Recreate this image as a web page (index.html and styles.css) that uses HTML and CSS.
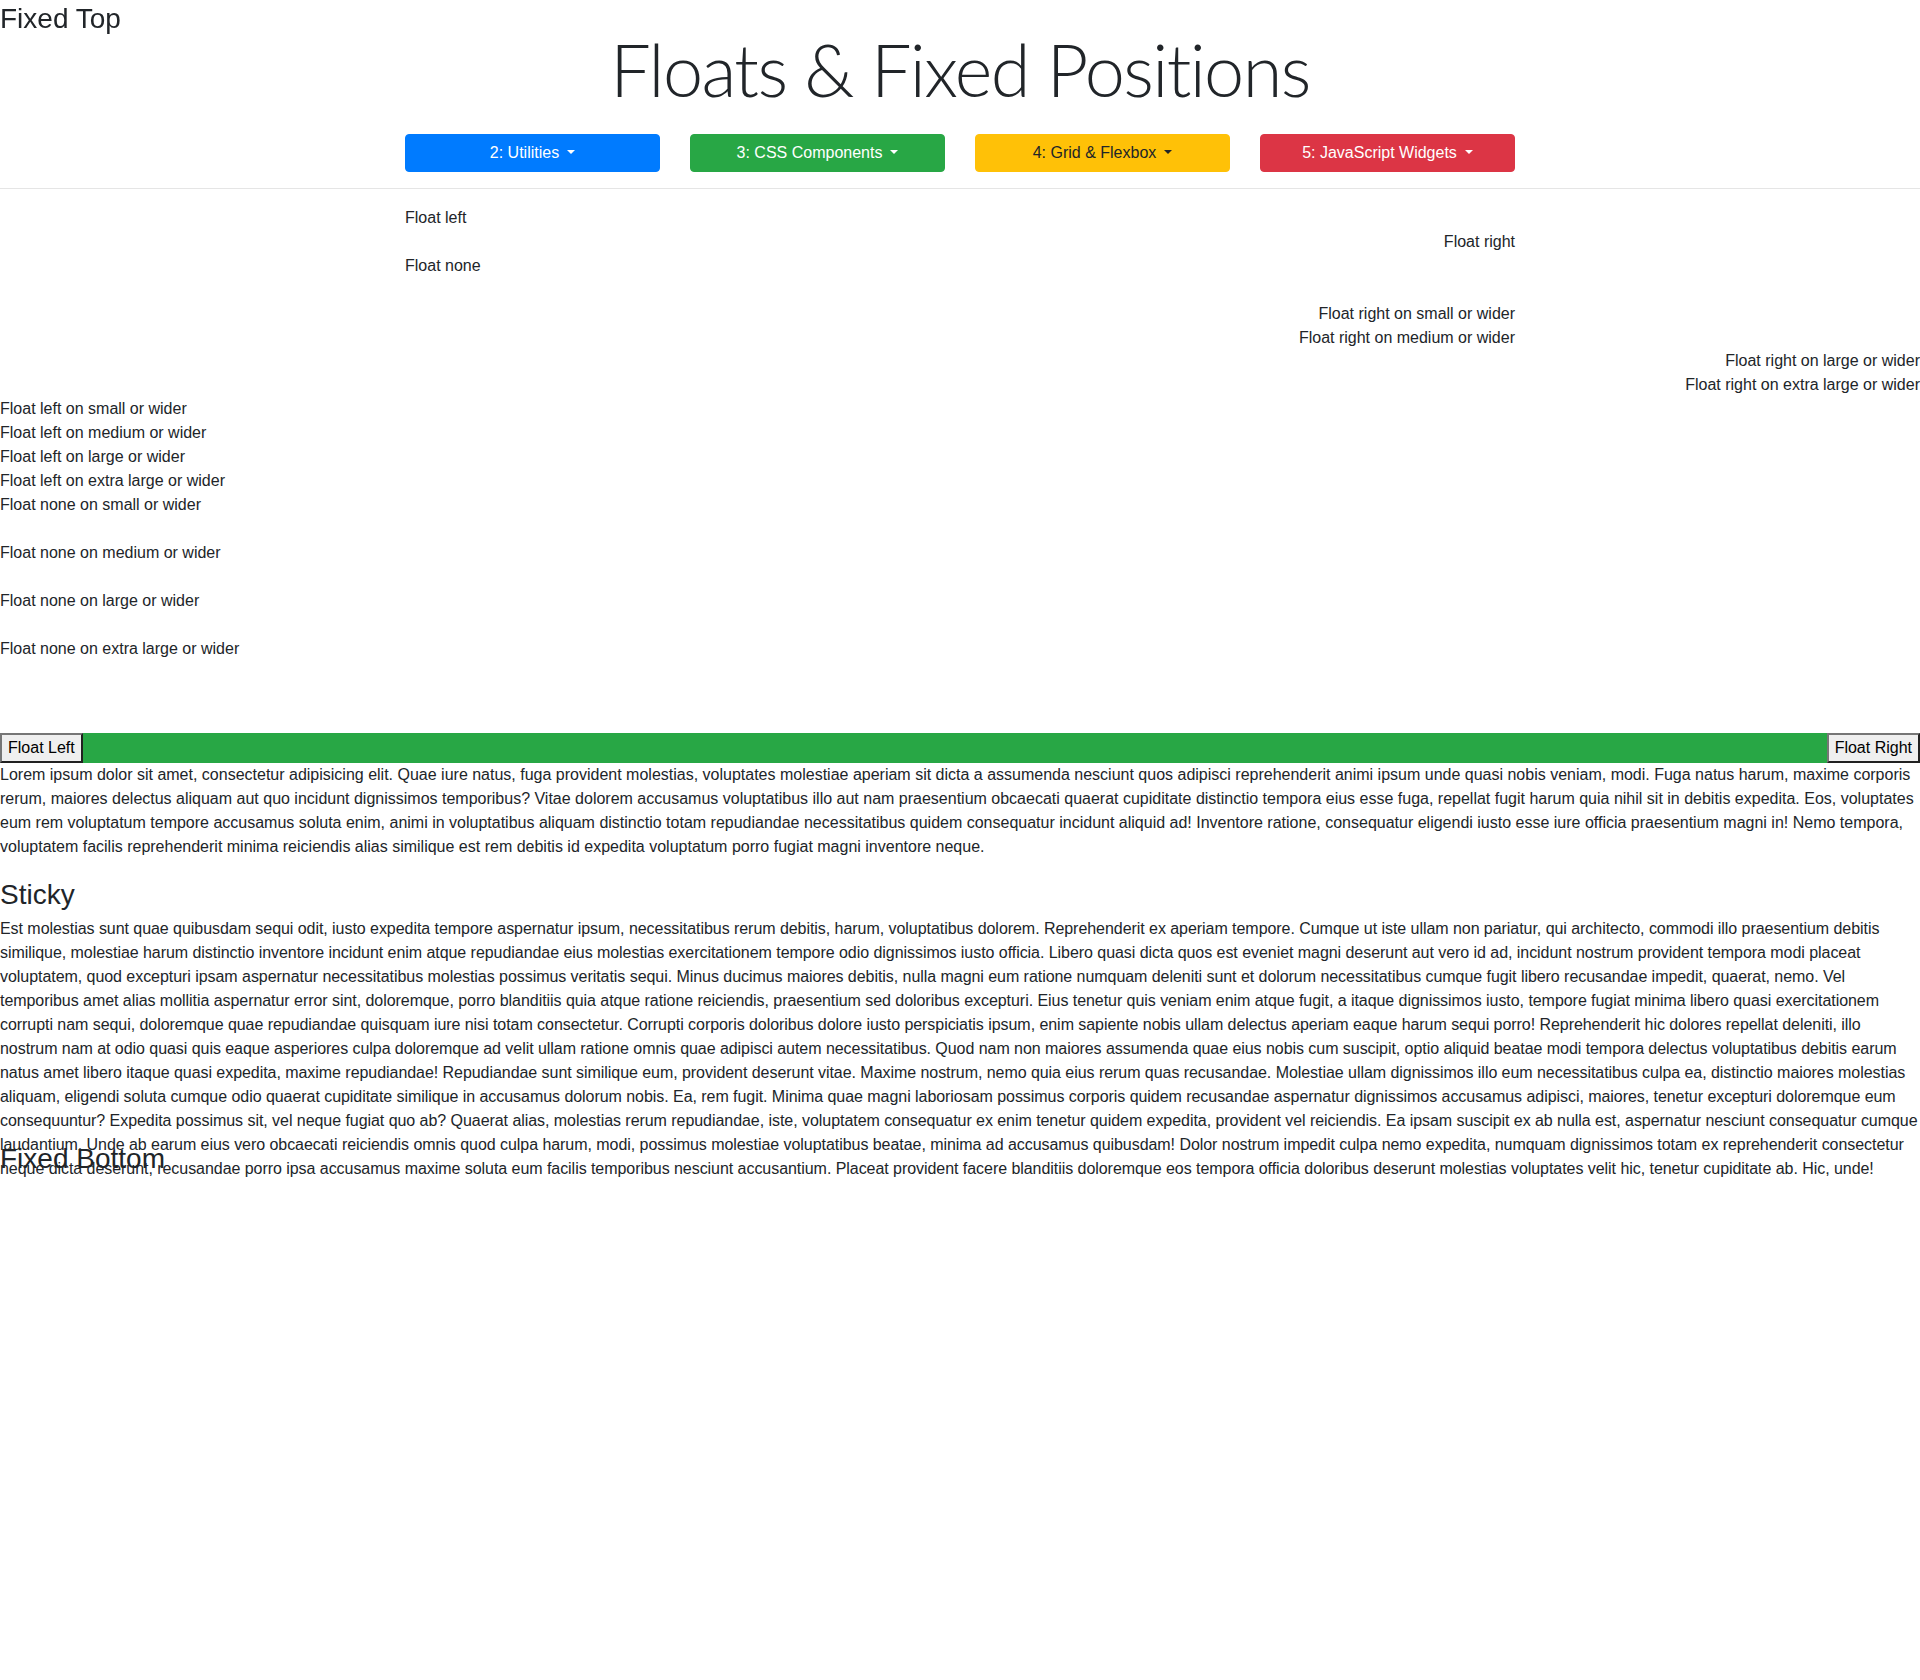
FILE: index.html
```html
<!DOCTYPE html>
<html lang="en">
<head>
<meta charset="utf-8">
<title>Floats &amp; Fixed Positions</title>
<link rel="stylesheet" href="styles.css">
</head>
<body>
<h3 class="fixed-top">Fixed Top</h3>

<header class="container">
  <h1 class="display">Floats &amp; Fixed Positions</h1>
  <nav class="nav-row">
    <button class="btn btn-primary dropdown-toggle">2: Utilities</button>
    <button class="btn btn-success dropdown-toggle">3: CSS Components</button>
    <button class="btn btn-warning dropdown-toggle">4: Grid &amp; Flexbox</button>
    <button class="btn btn-danger dropdown-toggle">5: JavaScript Widgets</button>
  </nav>
</header>
<hr class="divider">

<section class="container floats">
  <div class="line">Float left</div>
  <div class="line right">Float right</div>
  <div class="line spaced">Float none</div>
  <div class="line right">Float right on small or wider</div>
  <div class="line right">Float right on medium or wider</div>
</section>

<section class="floats-wide">
  <div class="line right">Float right on large or wider</div>
  <div class="line right">Float right on extra large or wider</div>
  <div class="line">Float left on small or wider</div>
  <div class="line">Float left on medium or wider</div>
  <div class="line">Float left on large or wider</div>
  <div class="line">Float left on extra large or wider</div>
  <div class="line spaced">Float none on small or wider</div>
  <div class="line spaced">Float none on medium or wider</div>
  <div class="line spaced">Float none on large or wider</div>
  <div class="line">Float none on extra large or wider</div>
</section>

<div class="bar">
  <button class="plain-btn">Float Left</button>
  <button class="plain-btn">Float Right</button>
</div>

<p class="text">Lorem ipsum dolor sit amet, consectetur adipisicing elit. Quae iure natus, fuga provident molestias, voluptates molestiae aperiam sit dicta a assumenda nesciunt quos adipisci reprehenderit animi ipsum unde quasi nobis veniam, modi. Fuga natus harum, maxime corporis<br>
rerum, maiores delectus aliquam aut quo incidunt dignissimos temporibus? Vitae dolorem accusamus voluptatibus illo aut nam praesentium obcaecati quaerat cupiditate distinctio tempora eius esse fuga, repellat fugit harum quia nihil sit in debitis expedita. Eos, voluptates<br>
eum rem voluptatum tempore accusamus soluta enim, animi in voluptatibus aliquam distinctio totam repudiandae necessitatibus quidem consequatur incidunt aliquid ad! Inventore ratione, consequatur eligendi iusto esse iure officia praesentium magni in! Nemo tempora,<br>
voluptatem facilis reprehenderit minima reiciendis alias similique est rem debitis id expedita voluptatum porro fugiat magni inventore neque.</p>

<h3 class="sticky">Sticky</h3>
<p class="text text-tight">Est molestias sunt quae quibusdam sequi odit, iusto expedita tempore aspernatur ipsum, necessitatibus rerum debitis, harum, voluptatibus dolorem. Reprehenderit ex aperiam tempore. Cumque ut iste ullam non pariatur, qui architecto, commodi illo praesentium debitis<br>
similique, molestiae harum distinctio inventore incidunt enim atque repudiandae eius molestias exercitationem tempore odio dignissimos iusto officia. Libero quasi dicta quos est eveniet magni deserunt aut vero id ad, incidunt nostrum provident tempora modi placeat<br>
voluptatem, quod excepturi ipsam aspernatur necessitatibus molestias possimus veritatis sequi. Minus ducimus maiores debitis, nulla magni eum ratione numquam deleniti sunt et dolorum necessitatibus cumque fugit libero recusandae impedit, quaerat, nemo. Vel<br>
temporibus amet alias mollitia aspernatur error sint, doloremque, porro blanditiis quia atque ratione reiciendis, praesentium sed doloribus excepturi. Eius tenetur quis veniam enim atque fugit, a itaque dignissimos iusto, tempore fugiat minima libero quasi exercitationem<br>
corrupti nam sequi, doloremque quae repudiandae quisquam iure nisi totam consectetur. Corrupti corporis doloribus dolore iusto perspiciatis ipsum, enim sapiente nobis ullam delectus aperiam eaque harum sequi porro! Reprehenderit hic dolores repellat deleniti, illo<br>
nostrum nam at odio quasi quis eaque asperiores culpa doloremque ad velit ullam ratione omnis quae adipisci autem necessitatibus. Quod nam non maiores assumenda quae eius nobis cum suscipit, optio aliquid beatae modi tempora delectus voluptatibus debitis earum<br>
natus amet libero itaque quasi expedita, maxime repudiandae! Repudiandae sunt similique eum, provident deserunt vitae. Maxime nostrum, nemo quia eius rerum quas recusandae. Molestiae ullam dignissimos illo eum necessitatibus culpa ea, distinctio maiores molestias<br>
aliquam, eligendi soluta cumque odio quaerat cupiditate similique in accusamus dolorum nobis. Ea, rem fugit. Minima quae magni laboriosam possimus corporis quidem recusandae aspernatur dignissimos accusamus adipisci, maiores, tenetur excepturi doloremque eum<br>
consequuntur? Expedita possimus sit, vel neque fugiat quo ab? Quaerat alias, molestias rerum repudiandae, iste, voluptatem consequatur ex enim tenetur quidem expedita, provident vel reiciendis. Ea ipsam suscipit ex ab nulla est, aspernatur nesciunt consequatur cumque<br>
laudantium. Unde ab earum eius vero obcaecati reiciendis omnis quod culpa harum, modi, possimus molestiae voluptatibus beatae, minima ad accusamus quibusdam! Dolor nostrum impedit culpa nemo expedita, numquam dignissimos totam ex reprehenderit consectetur<br>
neque dicta deserunt, recusandae porro ipsa accusamus maxime soluta eum facilis temporibus nesciunt accusantium. Placeat provident facere blanditiis doloremque eos tempora officia doloribus deserunt molestias voluptates velit hic, tenetur cupiditate ab. Hic, unde!</p>

<h3 class="fixed-bottom">Fixed Bottom</h3>
</body>
</html>
```

FILE: styles.css
```css
html, body {
  margin: 0;
  padding: 0;
}

body {
  font-family: "Liberation Sans", Arial, sans-serif;
  font-size: 16px;
  line-height: 24px;
  color: #212529;
  background: #fff;
  position: relative;
  min-height: 1680px;
}

.container {
  width: 1110px;
  margin: 0 auto;
}

.fixed-top,
.fixed-bottom,
.sticky {
  font-family: "Liberation Sans", Arial, sans-serif;
  font-size: 28px;
  line-height: 1.2;
  font-weight: 400;
  color: #212529;
}

.fixed-top {
  position: fixed;
  top: 0;
  left: 0;
  margin: 0;
  padding-top: 2px;
  z-index: 10;
}

.fixed-bottom {
  position: absolute;
  top: 1142px;
  left: 0;
  margin: 0;
  z-index: 10;
}

.display {
  font-family: Lato, "Liberation Sans", sans-serif;
  font-weight: 300;
  font-size: 72px;
  line-height: 1.2;
  letter-spacing: -1.6px;
  text-align: center;
  margin: 26px 0 22px;
  color: #212529;
}

.nav-row {
  display: grid;
  grid-template-columns: repeat(4, 1fr);
  column-gap: 30px;
}

.btn {
  font-family: "Liberation Sans", Arial, sans-serif;
  font-size: 16px;
  line-height: 24px;
  height: 38px;
  padding: 6px 12px;
  border: 1px solid transparent;
  border-radius: 4px;
  color: #fff;
  text-align: center;
  cursor: pointer;
}

.btn-primary { background: #007bff; border-color: #007bff; }
.btn-success { background: #28a745; border-color: #28a745; }
.btn-warning { background: #ffc107; border-color: #ffc107; color: #212529; }
.btn-danger  { background: #dc3545; border-color: #dc3545; }

.dropdown-toggle::after {
  content: "";
  display: inline-block;
  margin-left: 8px;
  vertical-align: 0.255em;
  border-top: 0.3em solid;
  border-right: 0.3em solid transparent;
  border-left: 0.3em solid transparent;
  border-bottom: 0;
}

.divider {
  margin: 16px 0;
  border: 0;
  border-top: 1px solid rgba(0, 0, 0, 0.1);
  height: 0;
}

.floats {
  padding-top: 1px;
  margin-bottom: -1px;
}

.line {
  height: 24px;
  white-space: nowrap;
}

.line.right {
  text-align: right;
}

.line.spaced {
  margin-bottom: 24px;
}

.floats-wide {
  margin-bottom: 72px;
}

.bar {
  display: flex;
  justify-content: space-between;
  background: #28a745;
  height: 30px;
}

.plain-btn {
  font-family: "Liberation Sans", Arial, sans-serif;
  font-size: 16px;
  line-height: 24px;
  padding: 1px 6px;
  margin: 0;
  border: 2px outset #767676;
  border-radius: 0;
  background: #efefef;
  color: #000;
}

.text {
  margin: 0 0 16px;
}

.text-tight {
  letter-spacing: -0.05px;
}

.sticky {
  margin: 0 0 5px;
  padding-top: 3px;
}
```
